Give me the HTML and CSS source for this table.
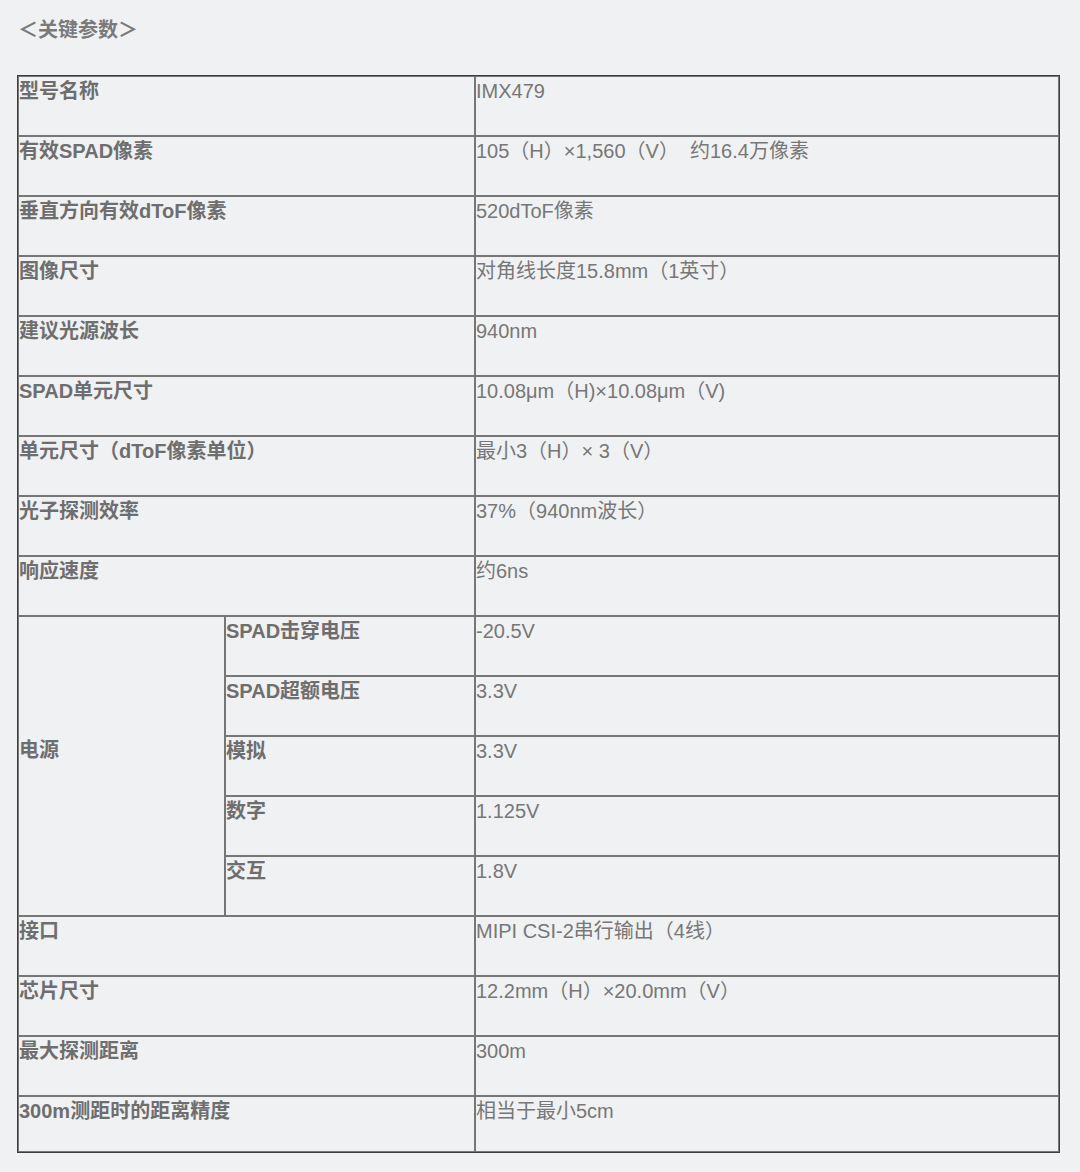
FILE: index.html
```html
<!DOCTYPE html>
<html lang="zh-CN">
<head>
<meta charset="utf-8">
<link rel="stylesheet" href="styles.css">
</head>
<body>
<div class="page">
  <h2 class="title">＜关键参数＞</h2>
  <table class="spec">
    <colgroup>
      <col class="c1"><col class="c2"><col class="c3">
    </colgroup>
    <tbody>
      <tr><td class="lbl" colspan="2">型号名称</td><td class="val">IMX479</td></tr>
      <tr><td class="lbl" colspan="2">有效SPAD像素</td><td class="val">105（H）×1,560（V）&nbsp;&nbsp;约16.4万像素</td></tr>
      <tr><td class="lbl" colspan="2">垂直方向有效dToF像素</td><td class="val">520dToF像素</td></tr>
      <tr><td class="lbl" colspan="2">图像尺寸</td><td class="val">对角线长度15.8mm（1英寸）</td></tr>
      <tr><td class="lbl" colspan="2">建议光源波长</td><td class="val">940nm</td></tr>
      <tr><td class="lbl" colspan="2">SPAD单元尺寸</td><td class="val">10.08μm（H)×10.08μm（V)</td></tr>
      <tr><td class="lbl" colspan="2">单元尺寸（dToF像素单位）</td><td class="val">最小3（H）× 3（V）</td></tr>
      <tr><td class="lbl" colspan="2">光子探测效率</td><td class="val">37%（940nm波长）</td></tr>
      <tr><td class="lbl" colspan="2">响应速度</td><td class="val">约6ns</td></tr>
      <tr><td class="lbl group" rowspan="5">电源</td><td class="lbl">SPAD击穿电压</td><td class="val">-20.5V</td></tr>
      <tr><td class="lbl">SPAD超额电压</td><td class="val">3.3V</td></tr>
      <tr><td class="lbl">模拟</td><td class="val">3.3V</td></tr>
      <tr><td class="lbl">数字</td><td class="val">1.125V</td></tr>
      <tr><td class="lbl">交互</td><td class="val">1.8V</td></tr>
      <tr><td class="lbl" colspan="2">接口</td><td class="val">MIPI CSI-2串行输出（4线）</td></tr>
      <tr><td class="lbl" colspan="2">芯片尺寸</td><td class="val">12.2mm（H）×20.0mm（V）</td></tr>
      <tr><td class="lbl" colspan="2">最大探测距离</td><td class="val">300m</td></tr>
      <tr class="last"><td class="lbl" colspan="2">300m测距时的距离精度</td><td class="val">相当于最小5cm</td></tr>
    </tbody>
  </table>
</div>
</body>
</html>
```

FILE: styles.css
```css
html, body {
  margin: 0;
  padding: 0;
  background: #f0f1f3;
}
body {
  font-family: "Liberation Sans", "Noto Sans CJK SC", sans-serif;
  color: #747474;
  font-size: 20px;
}
.page {
  padding: 17px 20px 0 17px;
}
.title {
  margin: 0 0 32px 1px;
  font-size: 20px;
  font-weight: bold;
  line-height: 26px;
  color: #7a7a7a;
}
.spec {
  width: 1043px;
  table-layout: fixed;
  border-collapse: separate;
  border-spacing: 0;
  border: 1px solid #3e3e3e;
}
.c1 { width: 207px; }
.c2 { width: 250px; }
.c3 { width: 584px; }
.spec td {
  border: 1px solid #767676;
  padding: 1px 0 0 0;
  height: 57px;
  vertical-align: top;
  line-height: 26px;
  white-space: nowrap;
}
.spec tr.last td { height: 53px; }
.lbl {
  font-weight: bold;
  color: #6e6e6e;
}
.val {
  color: #777;
}
.spec td.group {
  vertical-align: middle;
  padding-bottom: 34px;
}
```
